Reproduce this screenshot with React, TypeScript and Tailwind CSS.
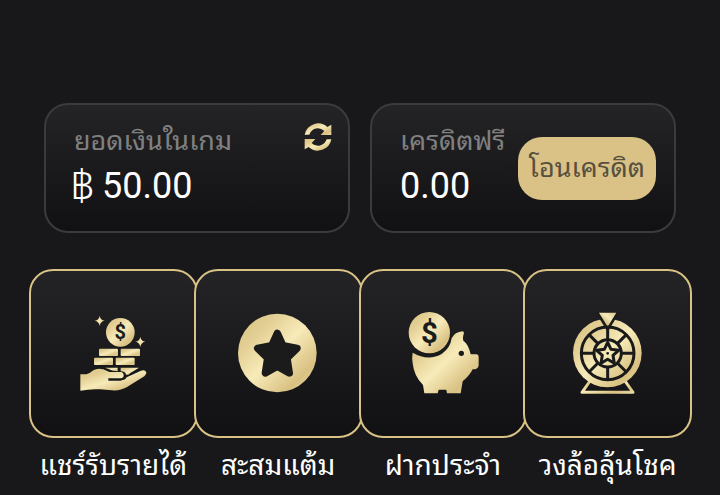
import React from 'react';

interface MenuItem {
  label: string;
  icon: React.ReactNode;
}

const GoldGradient: React.FC = () => (
  <svg className="absolute h-0 w-0" aria-hidden="true">
    <defs>
      <linearGradient id="gold" x1="0" y1="0" x2="1" y2="1">
        <stop offset="0" stopColor="#d8c080" />
        <stop offset="0.25" stopColor="#e3cf94" />
        <stop offset="0.5" stopColor="#f7ebb9" />
        <stop offset="0.8" stopColor="#d9c182" />
        <stop offset="1" stopColor="#e9d99f" />
      </linearGradient>
      <linearGradient id="gold-rise" x1="0" y1="1" x2="1" y2="0">
        <stop offset="0" stopColor="#e9d99f" />
        <stop offset="0.35" stopColor="#d9c48a" />
        <stop offset="0.6" stopColor="#f7ebb9" />
        <stop offset="1" stopColor="#dcc68a" />
      </linearGradient>
    </defs>
  </svg>
);

const RefreshIcon: React.FC = () => (
  <svg viewBox="0 0 84 84" className="size-7" fill="url(#gold)" aria-hidden="true">
    <path d="M2 35 A41 41 0 0 1 70 12 L82 5 V36 H50 L61 24 A27 27 0 0 0 16 35Z" />
    <path d="M82 49 A41 41 0 0 1 14 72 L2 79 V48 H34 L23 60 A27 27 0 0 0 68 49Z" />
  </svg>
);

const ShareIcon: React.FC = () => (
  <svg viewBox="-6 1 270 288" className="w-full" fill="url(#gold)" aria-hidden="true">
    <path d="M89 33 Q91 46 104 48 Q91 50 89 64 Q87 50 74 48 Q87 46 89 33Z" />
    <path d="M211 96 Q213 109 226 111 Q213 113 211 127 Q209 113 196 111 Q209 109 211 96Z" />
    <circle cx="151" cy="83" r="43" />
    <text x="151" y="104" textAnchor="middle" className="fill-[#1c1c1d] font-['Roboto'] text-[60px] font-bold">$</text>
    <rect x="87" y="132" width="57" height="22" rx="3" />
    <rect x="152" y="132" width="58" height="22" rx="3" />
    <rect x="72" y="159" width="57" height="22" rx="3" />
    <rect x="137" y="159" width="57" height="22" rx="3" />
    <path d="M105 189 H143 V200 Q128 200 117 194Z" />
    <path d="M152 189 H207 L180 206 Q176 212 168 210 Q166 200 152 200Z" />
    <path d="M31 209 H49 Q60 206 70 197 Q82 189 100 194 L118 202 H151 Q162 203 161 213 Q160 221 149 221 H115 V228 H151 Q167 226 170 218 L213 198 Q225 194 229 203 Q230 210 223 215 L170 248 Q151 259 126 257 L90 254 Q62 252 31 258Z" />
  </svg>
);

const StarIcon: React.FC = () => (
  <svg viewBox="129 136 270 288" className="w-full" aria-hidden="true">
    <circle cx="262" cy="280" r="118" fill="url(#gold)" />
    <path
      d="M262 221 L279 258 L321 266 L291 295 L298 340 L262 320 L226 340 L233 295 L203 266 L245 258Z"
      fill="#1b1b1c"
      stroke="#1b1b1c"
      strokeWidth="22"
      strokeLinejoin="round"
    />
  </svg>
);

const PiggyIcon: React.FC = () => (
  <svg viewBox="-6 1 270 288" className="w-full" fill="url(#gold)" aria-hidden="true">
    <path d="M38 144 Q85 171 126 147 Q151 130 155 101 Q164 82 188 80 Q194 82 190 92 Q187 102 190 108 Q205 118 212 149 H231 Q236 151 236 157 V183 Q235 190 226 194 H218 Q209 213 188 230 L182 266 H141 L139 255 H116 L113 266 H73 L69 241 Q42 215 38 176 Q35 158 38 144Z" />
    <circle cx="88" cy="84" r="62" />
    <circle cx="184" cy="146" r="8" fill="#1a1a1b" />
    <text x="88" y="115" textAnchor="middle" className="fill-[#1c1c1d] font-['Roboto'] text-[88px] font-bold">$</text>
  </svg>
);

const WheelIcon: React.FC = () => (
  <svg viewBox="3 1 270 288" className="w-full" aria-hidden="true">
    <path
      d="M84 229 L60 263 H213 L189 229"
      fill="none"
      stroke="url(#gold)"
      strokeWidth="9"
      strokeLinejoin="round"
    />
    <circle cx="136" cy="145" r="103" fill="url(#gold)" />
    <path d="M100 22 H173 L137 82Z" fill="#1c1c1d" />
    <path d="M111 24 H163 L137 66Z" fill="url(#gold-rise)" />
    <g fill="none" stroke="#1a1a1b" strokeWidth="9">
      <circle cx="137" cy="146" r="79" />
      <circle cx="137" cy="146" r="41" />
      <path d="M137 64 V105 M137 187 V225 M58 146 H96 M178 146 H216 M81 90 L108 117 M166 175 L193 202 M193 90 L166 117 M108 175 L81 202" />
      <path
        d="M137 113 L147 134 L170 137 L153 152 L157 176 L137 164 L117 176 L121 152 L104 137 L127 134Z"
        strokeLinejoin="round"
      />
    </g>
    <circle cx="137" cy="146" r="4" fill="#1a1a1b" />
  </svg>
);

const menuItems: MenuItem[] = [
  { label: 'แชร์รับรายได้', icon: <ShareIcon /> },
  { label: 'สะสมแต้ม', icon: <StarIcon /> },
  { label: 'ฝากประจำ', icon: <PiggyIcon /> },
  { label: 'วงล้อลุ้นโชค', icon: <WheelIcon /> },
];

export default function App() {
  return (
    <main className="min-h-screen bg-[#18181a] pt-[103px] font-['Roboto','Noto_Sans_Thai_Looped','Noto_Sans',sans-serif] text-white">
      <GoldGradient />

      {/* Balances */}
      <section className="grid grid-cols-2 gap-5 px-11">
        <div className="flex h-[130px] items-start justify-between rounded-3xl border-2 border-[#3b3b3d] bg-linear-to-b from-[#242426] to-[#111113] pt-5 pr-4 pl-6">
          <div>
            <h2 className="px-1 text-[27px] leading-8 text-[#808080]">ยอดเงินในเกม</h2>
            <p className="mt-2 flex gap-2 text-4xl leading-[42px]">
              <span className="text-[42px] font-light">฿</span>
              <span>50.00</span>
            </p>
          </div>
          <button type="button" aria-label="รีเฟรช" className="-mt-0.5 cursor-pointer">
            <RefreshIcon />
          </button>
        </div>

        <div className="flex h-[130px] items-start justify-between rounded-3xl border-2 border-[#3b3b3d] bg-linear-to-b from-[#242426] to-[#111113] pt-5 pr-[18px] pl-7">
          <div>
            <h2 className="text-[27px] leading-8 whitespace-nowrap text-[#808080]">เครดิตฟรี</h2>
            <p className="mt-2 text-4xl leading-[42px]">0.00</p>
          </div>
          <button
            type="button"
            className="mt-3 h-[63px] shrink-0 cursor-pointer rounded-3xl bg-[#dac286] px-[11px] text-[27px] whitespace-nowrap text-[#57503f]"
          >
            โอนเครดิต
          </button>
        </div>
      </section>

      {/* Menu */}
      <nav className="mt-9 flex -space-x-1 pr-7 pl-[29px]">
        {menuItems.map((item) => (
          <a key={item.label} href="#" className="min-w-0 flex-1 text-center">
            <div className="flex aspect-square items-center justify-center rounded-3xl border-2 border-[#d8c286] bg-linear-to-b from-[#242426] to-[#111113]">
              <div className="w-[90px]">{item.icon}</div>
            </div>
            <span className="mt-2 block text-[28px] leading-10 whitespace-nowrap">{item.label}</span>
          </a>
        ))}
      </nav>
    </main>
  );
}
